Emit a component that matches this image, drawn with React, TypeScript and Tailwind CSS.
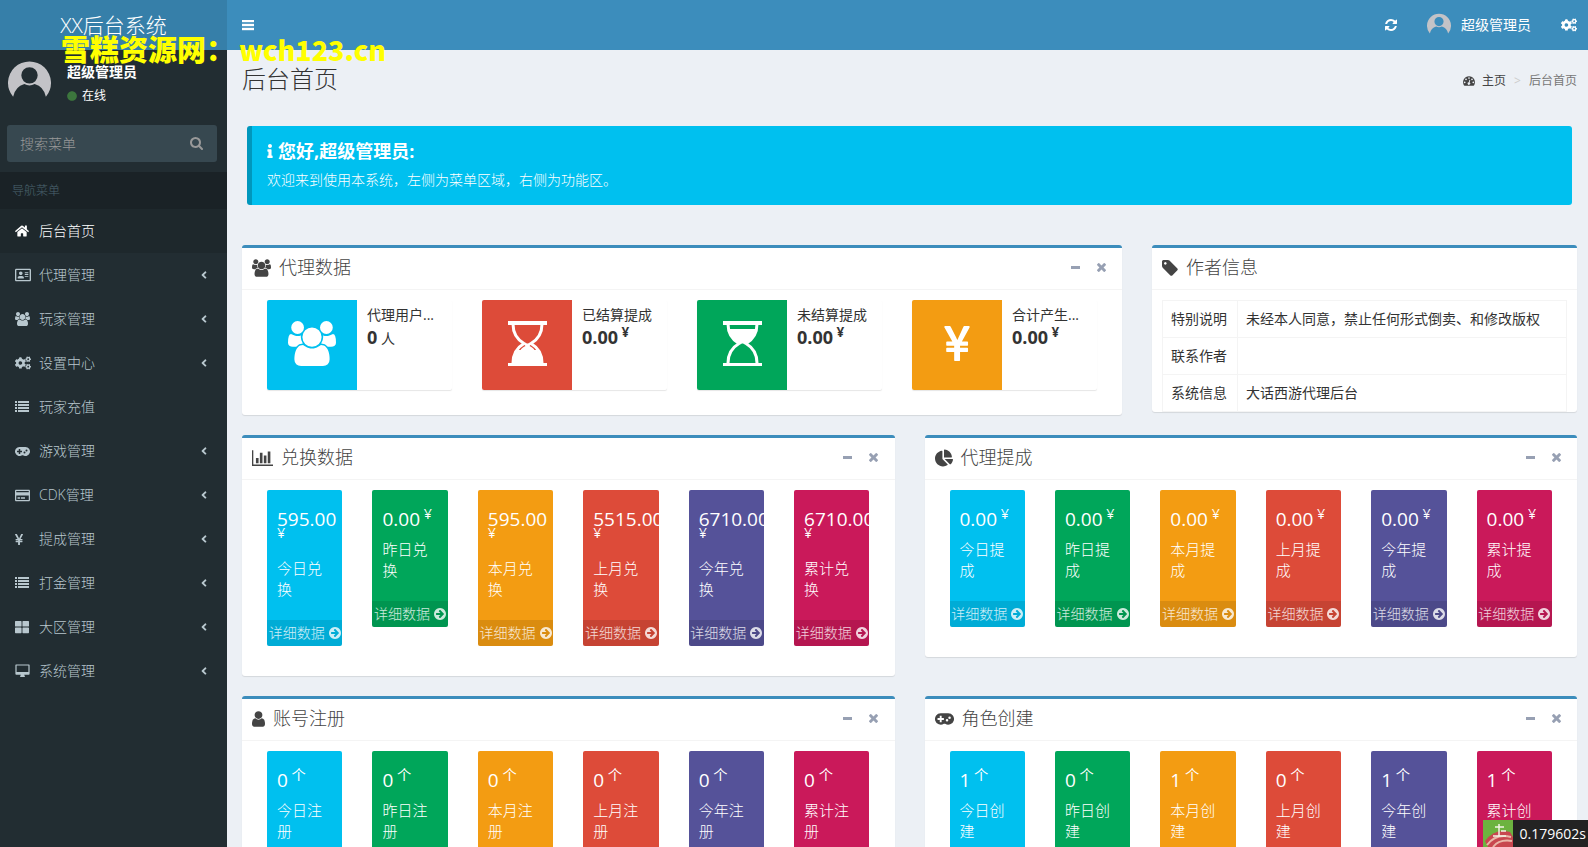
import type { ReactNode } from 'react'
import {
  FaAngleLeft,
  FaChartPie,
  FaCircle,
  FaCogs,
  FaHome,
  FaInfo,
  FaRegAddressCard,
  FaRegCreditCard,
  FaThLarge,
} from 'react-icons/fa'

interface IconProps {
  className?: string
}

function GroupIcon({ className }: IconProps) {
  return (
    <svg className={className} viewBox="0 0 1920 1792" fill="currentColor" aria-hidden="true">
      <path d="M593 896q-162 5-265 128h-134q-82 0-138-40.5t-56-118.5q0-353 124-353 6 0 43.5 21t97.5 42.5 119 21.5q67 0 133-23-5 37-5 66 0 139 81 256zm1071 637q0 120-73 189.5t-194 69.5h-874q-121 0-194-69.5t-73-189.5q0-53 3.5-103.5t14-109 26.5-108.5 43-97.5 62-81 85.5-53.5 111.5-20q10 0 43 21.5t73 48 107 48 135 21.5 135-21.5 107-48 73-48 43-21.5q61 0 111.5 20t85.5 53.5 62 81 43 97.5 26.5 108.5 14 109 3.5 103.5zm-1024-1277q0 106-75 181t-181 75-181-75-75-181 75-181 181-75 181 75 75 181zm704 384q0 159-112.5 271.5t-271.5 112.5-271.5-112.5-112.5-271.5 112.5-271.5 271.5-112.5 271.5 112.5 112.5 271.5zm576 225q0 78-56 118.5t-138 40.5h-134q-103-123-265-128 81-117 81-256 0-29-5-66 66 23 133 23 59 0 119-21.5t97.5-42.5 43.5-21q124 0 124 353zm-128-609q0 106-75 181t-181 75-181-75-75-181 75-181 181-75 181 75 75 181z" />
    </svg>
  )
}

function RefreshIcon({ className }: IconProps) {
  return (
    <svg className={className} viewBox="128 128 1536 1536" fill="currentColor" aria-hidden="true">
      <path d="M1639 1056q0 5-1 7-64 268-268 434.5t-478 166.5q-146 0-282.5-55t-243.5-157l-129 129q-19 19-45 19t-45-19-19-45v-448q0-26 19-45t45-19h448q26 0 45 19t19 45-19 45l-137 137q71 66 161 102t187 36q134 0 250-65t186-179q11-17 53-117 8-23 30-23h192q13 0 22.5 9.5t9.5 22.5zm25-800v448q0 26-19 45t-45 19h-448q-26 0-45-19t-19-45 19-45l138-138q-148-137-349-137-134 0-250 65t-186 179q-11 17-53 117-8 23-30 23h-199q-13 0-22.5-9.5t-9.5-22.5v-7q65-268 270-434.5t480-166.5q146 0 284 55.5t245 156.5l130-129q19-19 45-19t45 19 19 45z" />
    </svg>
  )
}

function YenIcon({ className }: IconProps) {
  return (
    <svg className={className} viewBox="382 128 1027 1408" fill="currentColor" aria-hidden="true">
      <path d="M985.5 1536h-172q-13 0-22.5-9t-9.5-23v-330h-288q-13 0-22.5-9t-9.5-23v-103q0-13 9.5-22.5t22.5-9.5h288v-85h-288q-13 0-22.5-9t-9.5-23v-104q0-13 9.5-22.5t22.5-9.5h214l-321-578q-8-16 0-32 10-16 28-16h194q19 0 29 18l215 425q19 38 56 125 10-24 30.5-68t27.5-61l191-420q8-19 29-19h191q17 0 27 16 9 14 1 31l-313 579h215q13 0 22.5 9.5t9.5 22.5v104q0 14-9.5 23t-22.5 9h-290v85h290q13 0 22.5 9.5t9.5 22.5v103q0 14-9.5 23t-22.5 9h-290v330q0 13-9.5 22.5t-22.5 9.5z" />
    </svg>
  )
}

function BarChartIcon({ className }: IconProps) {
  return (
    <svg className={className} viewBox="0 128 2048 1536" fill="currentColor" aria-hidden="true">
      <path d="M640 896v512h-256v-512h256zm384-512v1024h-256v-1024h256zm1024 1152v128h-2048v-1536h128v1408h1920zm-640-896v768h-256v-768h256zm384-384v1152h-256v-1152h256z" />
    </svg>
  )
}

function SearchIcon({ className }: IconProps) {
  return (
    <svg className={className} viewBox="64 128 1664 1664" fill="currentColor" aria-hidden="true">
      <path d="M1216 832q0-185-131.5-316.5t-316.5-131.5-316.5 131.5-131.5 316.5 131.5 316.5 316.5 131.5 316.5-131.5 131.5-316.5zm512 832q0 52-38 90t-90 38q-54 0-90-38l-343-342q-179 124-399 124-143 0-273.5-55.5t-225-150-150-225-55.5-273.5 55.5-273.5 150-225 225-150 273.5-55.5 273.5 55.5 225 150 150 225 55.5 273.5q0 220-124 399l343 343q37 37 37 90z" />
    </svg>
  )
}

function TimesIcon({ className }: IconProps) {
  return (
    <svg className={className} viewBox="302 366 1188 1188" fill="currentColor" aria-hidden="true">
      <path d="M1490 1322q0 40-28 68l-136 136q-28 28-68 28t-68-28l-294-294-294 294q-28 28-68 28t-68-28l-136-136q-28-28-28-68t28-68l294-294-294-294q-28-28-28-68t28-68l136-136q28-28 68-28t68 28l294 294 294-294q28-28 68-28t68 28l136 136q28 28 28 68t-28 68l-294 294 294 294q28 28 28 68z" />
    </svg>
  )
}

function UserIcon({ className }: IconProps) {
  return (
    <svg className={className} viewBox="256 128 1280 1536" fill="currentColor" aria-hidden="true">
      <path d="M1536 1399q0 109-62.5 187t-150.500 78h-854q-88 0-150.500-78t-62.500-187q0-85 8.500-160.500t31.500-152 58.500-131 94-89 134.500-34.500q131 128 313 128t313-128q76 0 134.500 34.500t94 89 58.500 131 31.500 152 8.500 160.500zm-256-887q0 159-112.500 271.500t-271.500 112.500-271.500-112.500-112.500-271.500 112.500-271.500 271.500-112.500 271.500 112.500 112.500 271.500z" />
    </svg>
  )
}

function TagIcon({ className }: IconProps) {
  return (
    <svg className={className} viewBox="128 128 1536 1536" fill="currentColor" aria-hidden="true">
      <path d="M576 448q0-53-37.5-90.5t-90.5-37.5-90.5 37.5-37.5 90.5 37.5 90.5 90.5 37.5 90.5-37.5 37.5-90.5zm1067 576q0 53-37 90l-491 492q-39 37-91 37-53 0-90-37l-715-716q-38-37-64.5-101t-26.5-117v-416q0-52 38-90t90-38h416q53 0 117 26.5t102 64.5l715 714q37 39 37 91z" />
    </svg>
  )
}

function ArrowCircleIcon({ className }: IconProps) {
  return (
    <svg className={className} viewBox="128 128 1536 1536" fill="currentColor" aria-hidden="true">
      <path d="M1413 896q0-27-18-45l-91-91-362-362q-18-18-45-18t-45 18l-91 91q-18 18-18 45t18 45l189 189h-502q-26 0-45 19t-19 45v128q0 26 19 45t45 19h502l-189 189q-19 19-19 45t19 45l91 91q18 18 45 18t45-18l362-362 91-91q18-18 18-45zm251 0q0 209-103 385.5t-279.5 279.5-385.5 103-385.5-103-279.5-279.5-103-385.5 103-385.5 279.5-279.5 385.5-103 385.5 103 279.5 279.5 103 385.5z" />
    </svg>
  )
}

function BarsIcon() {
  return (
    <svg className="h-[11px] w-3" viewBox="0 0 12 11" fill="currentColor" aria-hidden="true">
      <path d="M0 0h12v2H0zM0 4h12v2H0zM0 8h12v2H0z" stroke="currentColor" strokeWidth=".4" />
    </svg>
  )
}

function ListIcon() {
  return (
    <svg className="h-3 w-[14px]" viewBox="0 0 14 12" fill="currentColor" aria-hidden="true">
      <path d="M0 0h2v2H0zM3 0h11v2H3zM0 3h2v2H0zM3 3h11v2H3zM0 6h2v2H0zM3 6h11v2H3zM0 9h2v2H0zM3 9h11v2H3z" />
    </svg>
  )
}

function GamepadIcon({ className }: IconProps) {
  return (
    <svg className={className} viewBox="0 0 30 18" fill="currentColor" fillRule="evenodd" aria-hidden="true">
      <path d="M9 0h12a9 9 0 1 1-5 16.500h-2A9 9 0 1 1 9 0zM7.500 4v3.500H4v3h3.500V14h3v-3.500H14v-3h-3.500V4zM19 9a2 2 0 1 0 0 4 2 2 0 0 0 0-4zM23 5a2 2 0 1 0 0 4 2 2 0 0 0 0-4z" />
    </svg>
  )
}

function DesktopIcon() {
  return (
    <svg className="h-[14px] w-[15px]" viewBox="0 0 15 14" aria-hidden="true">
      <path d="M1 1h13v9H1z" fill="none" stroke="currentColor" strokeWidth="1.200" strokeLinejoin="round" />
      <path d="M1 8h13v2.500H1zM6 10h3l1 3H5z" fill="currentColor" />
    </svg>
  )
}

function DashboardIcon({ className }: IconProps) {
  return (
    <svg className={className} viewBox="0 0 28 22" fill="currentColor" fillRule="evenodd" aria-hidden="true">
      <path d="M14 0a14 14 0 0 1 12 21q-.5 1-1.500 1h-21q-1 0-1.500-1A14 14 0 0 1 14 0zM4 12a2 2 0 1 0 0 4 2 2 0 0 0 0-4zM7 5a2 2 0 1 0 0 4 2 2 0 0 0 0-4zM14 2a2 2 0 1 0 0 4 2 2 0 0 0 0-4zM21 5a2 2 0 1 0 0 4 2 2 0 0 0 0-4zM24 12a2 2 0 1 0 0 4 2 2 0 0 0 0-4zM15 8l-1.500 6a3 3 0 1 0 2 .5L17 8.500z" />
    </svg>
  )
}

// sand at the bottom when `done`, otherwise still at the top
function Hourglass({ done }: { done?: boolean }) {
  return (
    <svg className="h-[45px] w-[39px]" viewBox="0 0 39 45" fill="none" aria-hidden="true">
      <path d="M0 0h39v4H0zM0 42h39v3H0z" fill="currentColor" />
      <path d="M5 3c0 10 5 16 11 19.500C10 26 5 32 5 42M34 3c0 10-5 16-11 19.500C29 26 34 32 34 42" stroke="currentColor" strokeWidth="3" />
      {done ? (
        <path d="M15 22.500h9L21.500 25c2 1 4 2 5 4h-14c1-2 3-3 5-4zM10 29h19c3 4 5 8 5 13H5c0-5 2-9 5-13z" fill="currentColor" />
      ) : (
        <path d="M6 8h27c-1 7-5 12-10 14.500h-7C11 20 7 15 6 8z" fill="currentColor" />
      )}
    </svg>
  )
}

function Avatar({ className }: IconProps) {
  return (
    <svg className={className} viewBox="0 4 42 42" aria-hidden="true">
      <path fill="#c3c3c7" fillRule="evenodd" d="M5 40A21 21 0 1 1 37 40Q35 30 26 27.500A10 10 0 0 1 16 27.500Q7 30 5 40zM21 11a8 8 0 1 1 0 16 8 8 0 0 1 0-16z" />
    </svg>
  )
}

interface MenuItem {
  label: string
  icon: ReactNode
  children?: boolean
}

const menuItems: MenuItem[] = [
  { label: '代理管理', icon: <FaRegAddressCard className="size-4" />, children: true },
  { label: '玩家管理', icon: <GroupIcon className="h-[14px] w-[15px]" />, children: true },
  { label: '设置中心', icon: <FaCogs className="size-4" />, children: true },
  { label: '玩家充值', icon: <ListIcon /> },
  { label: '游戏管理', icon: <GamepadIcon className="h-[9px] w-[15px]" />, children: true },
  { label: 'CDK管理', icon: <FaRegCreditCard className="size-[15px]" />, children: true },
  { label: '提成管理', icon: <YenIcon className="h-[11px] w-2" />, children: true },
  { label: '打金管理', icon: <ListIcon />, children: true },
  { label: '大区管理', icon: <FaThLarge className="size-[14px]" />, children: true },
  { label: '系统管理', icon: <DesktopIcon />, children: true },
]

const infoItems = [
  { label: '代理用户...', value: '0', unit: '人', color: 'bg-[#00c0ef]', icon: <GroupIcon className="h-[45px] w-12" /> },
  { label: '已结算提成', value: '0.00', color: 'bg-[#dd4b39]', icon: <Hourglass done /> },
  { label: '未结算提成', value: '0.00', color: 'bg-[#00a65a]', icon: <Hourglass /> },
  { label: '合计产生...', value: '0.00', color: 'bg-[#f39c12]', icon: <YenIcon className="h-[35px] w-[26px]" /> },
]

const periods = ['今日', '昨日', '本月', '上月', '今年', '累计']
const colors = ['bg-[#00c0ef]', 'bg-[#00a65a]', 'bg-[#f39c12]', 'bg-[#dd4b39]', 'bg-[#555299]', 'bg-[#ca195a]']

const authorRows = [
  ['特别说明', '未经本人同意，禁止任何形式倒卖、和修改版权'],
  ['联系作者', ''],
  ['系统信息', '大话西游代理后台'],
]

interface BoxProps {
  title: string
  icon: ReactNode
  tools?: boolean
  children: ReactNode
}

function Box({ title, icon, tools = true, children }: BoxProps) {
  return (
    <section className="mb-5 rounded-[3px] border-t-[3px] border-[#3c8dbc] bg-white shadow-[0_1px_1px_rgba(0,0,0,0.1)]">
      <header className="flex items-center justify-between border-b border-[#f4f4f4] px-[10px] pt-[9px] pb-[11px] text-[#444]">
        <h3 className="flex items-center gap-2 text-[18px] leading-[21px] font-light">
          {icon}
          {title}
        </h3>
        {tools && (
          <div className="flex gap-1 text-[#97a0b3]">
            <button className="flex h-5 w-[22px] items-center justify-center" aria-label="收起">
              <span className="h-[3px] w-[9px] bg-current" />
            </button>
            <button className="flex h-5 w-[22px] items-center justify-center" aria-label="关闭">
              <TimesIcon className="size-[9px]" />
            </button>
          </div>
        )}
      </header>
      {children}
    </section>
  )
}

interface StatBoxProps {
  title: string
  icon: ReactNode
  suffix: string
  unit: string
  values: string[]
}

function StatBox({ title, icon, suffix, unit, values }: StatBoxProps) {
  return (
    <div className="w-1/2 px-[15px]">
      <Box title={title} icon={icon}>
        <div className="grid grid-cols-6 items-start p-[10px]">
          {periods.map((period, i) => (
            <div key={period} className="min-w-0 px-[15px] pb-5">
              <div className={`overflow-hidden rounded-[2px] text-white ${colors[i]}`}>
                <div className="p-[10px]">
                  <h4 className="mb-[10px] pt-[10px] text-[19px] leading-[19px]">
                    {values[i]}
                    <sup> {unit}</sup>
                  </h4>
                  <p className="mb-[10px] text-[15px] leading-[21px] font-light">{period + suffix}</p>
                </div>
                <a href="#" className="flex items-center justify-center gap-1 bg-black/10 py-[3px] text-sm leading-5 font-light whitespace-nowrap text-white/80">
                  详细数据
                  <ArrowCircleIcon className="size-3 shrink-0" />
                </a>
              </div>
            </div>
          ))}
        </div>
      </Box>
    </div>
  )
}

function Header() {
  return (
    <header className="flex h-[50px] shrink-0 bg-[#3c8dbc] text-white">
      <a href="#" className="flex w-[227px] shrink-0 items-center justify-center bg-[#367fa9] text-[21px] font-light">
        XX后台系统
      </a>
      <nav className="flex flex-1 items-center justify-between pr-[11px] pl-[15px]">
        <button aria-label="切换菜单">
          <BarsIcon />
        </button>
        <div className="flex items-center gap-[30px] text-sm">
          <a href="#" aria-label="刷新">
            <RefreshIcon className="size-3" />
          </a>
          <a href="#" className="flex items-center gap-[10px]">
            <Avatar className="size-6" />
            超级管理员
          </a>
          <a href="#" aria-label="设置">
            <FaCogs className="size-4" />
          </a>
        </div>
      </nav>
    </header>
  )
}

function Sidebar() {
  return (
    <aside className="w-[227px] shrink-0 bg-[#222d32] text-sm text-[#b8c7ce]">
      <div className="flex gap-4 px-2 py-[10px] text-white">
        <Avatar className="size-[43px]" />
        <div className="h-[55px]">
          <p className="mt-[2px] mb-[6px] leading-5 font-bold">超级管理员</p>
          <a href="#" className="flex items-center gap-[5px] text-xs">
            <FaCircle className="size-[10px] text-[#3c763d]" />
            在线
          </a>
        </div>
      </div>
      <form className="mr-[10px] mb-[10px] ml-[7px] flex h-[37px] rounded-[3px] bg-[#374850]">
        <input type="text" placeholder="搜索菜单" aria-label="搜索菜单" className="min-w-0 flex-1 px-[13px] font-light outline-none placeholder:text-[#999]" />
        <button className="px-[14px] text-[#999]" aria-label="搜索">
          <SearchIcon className="size-[13px]" />
        </button>
      </form>
      <ul className="font-light">
        <li className="bg-[#1a2226] px-3 py-[10px] text-xs leading-[17px] text-[#4b646f]">导航菜单</li>
        <li>
          <a href="#" className="flex items-center bg-[#1e282c] py-3 pl-[15px] leading-5 text-white">
            <span className="w-6">
              <FaHome className="size-[14px]" />
            </span>
            后台首页
          </a>
        </li>
        {menuItems.map((item) => (
          <li key={item.label}>
            <a href="#" className="flex items-center py-3 pr-[17px] pl-[15px] leading-5">
              <span className="w-6">{item.icon}</span>
              <span className="flex-1">{item.label}</span>
              {item.children && <FaAngleLeft className="size-3" />}
            </a>
          </li>
        ))}
      </ul>
    </aside>
  )
}

export default function App() {
  return (
    <div className="relative flex h-screen flex-col overflow-hidden bg-[#ecf0f5] font-['Open_Sans','Noto_Sans_CJK_SC',sans-serif] text-sm text-[#333]">
      <Header />
      <div className="flex min-h-0 flex-1">
        <Sidebar />
        <main className="min-w-0 flex-1 overflow-y-auto pr-[11px] pl-[15px] [scrollbar-width:none]">
          <div className="flex items-end justify-between pt-[15px]">
            <h1 className="text-2xl leading-[28px] font-light">后台首页</h1>
            <nav className="flex items-center pb-1 text-xs text-[#444]">
              <DashboardIcon className="mr-[7px] h-[10px] w-3" />
              <a href="#">主页</a>
              <span className="mx-2 text-[#ccc]">&gt;</span>
              <span className="text-[#777]">后台首页</span>
            </nav>
          </div>

          <div className="mx-[5px] mt-[33px] mb-10 rounded-[3px] border-l-[5px] border-[#0097bc] bg-[#00c0ef] py-[15px] pr-[30px] pl-[15px] text-white">
            <h4 className="mb-2 flex items-center gap-[5px] text-[18px] leading-5 font-bold">
              <FaInfo className="h-[14px] w-[6px]" />
              您好,超级管理员:
            </h4>
            <p className="leading-[21px] font-light">欢迎来到使用本系统，左侧为菜单区域，右侧为功能区。</p>
          </div>

          <div className="-mx-[15px] flex items-start">
            <div className="w-2/3 px-[15px]">
              <Box title="代理数据" icon={<GroupIcon className="h-[18px] w-[19px]" />}>
                <div className="grid grid-cols-4 p-[10px]">
                  {infoItems.map((item) => (
                    <div key={item.label} className="px-[15px] pb-[15px]">
                      <div className="flex rounded-[2px] shadow-[0_1px_1px_rgba(0,0,0,0.1)]">
                        <span className={`flex size-[90px] shrink-0 items-center justify-center rounded-l-[2px] pb-1 text-white ${item.color}`}>
                          {item.icon}
                        </span>
                        <div className="min-w-0 px-[10px] py-[5px] whitespace-nowrap">
                          <span className="block leading-5">{item.label}</span>
                          <span className="block text-[18px] leading-6 font-bold">
                            {item.value}
                            {item.unit ? <small className="text-sm font-normal"> {item.unit}</small> : <sup> ¥</sup>}
                          </span>
                        </div>
                      </div>
                    </div>
                  ))}
                </div>
              </Box>
            </div>
            <div className="w-1/3 px-[15px]">
              <Box title="作者信息" icon={<TagIcon className="size-4" />} tools={false}>
                <div className="px-[10px] pt-[10px]">
                  <table className="w-full border-collapse border border-[#f4f4f4]">
                    <tbody>
                      {authorRows.map(([name, value]) => (
                        <tr key={name}>
                          <th scope="row" className="w-[75px] border border-[#f4f4f4] p-2 text-left leading-5 font-normal whitespace-nowrap">
                            {name}
                          </th>
                          <td className="border border-[#f4f4f4] p-2 leading-5">{value}</td>
                        </tr>
                      ))}
                    </tbody>
                  </table>
                </div>
              </Box>
            </div>
          </div>

          <div className="-mx-[15px] flex items-start">
            <StatBox
              title="兑换数据"
              icon={<BarChartIcon className="h-4 w-[21px]" />}
              suffix="兑换"
              unit="¥"
              values={['595.00', '0.00', '595.00', '5515.00', '6710.00', '6710.00']}
            />
            <StatBox
              title="代理提成"
              icon={<FaChartPie className="size-[18px]" />}
              suffix="提成"
              unit="¥"
              values={['0.00', '0.00', '0.00', '0.00', '0.00', '0.00']}
            />
          </div>

          <div className="-mx-[15px] flex items-start">
            <StatBox title="账号注册" icon={<UserIcon className="h-4 w-[13px]" />} suffix="注册" unit="个" values={['0', '0', '0', '0', '0', '0']} />
            <StatBox title="角色创建" icon={<GamepadIcon className="h-3 w-[19px]" />} suffix="创建" unit="个" values={['1', '0', '1', '0', '1', '1']} />
          </div>
        </main>
      </div>

      {/* watermark */}
      <p className="pointer-events-none absolute top-7 left-[61px] font-['Noto_Sans_CJK_SC',sans-serif] text-[29px] leading-10 font-black text-[#ff0]">
        雪糕资源网：<span className="ml-1 text-[27px]">wch123.cn</span>
      </p>

      {/* page trace badge */}
      <div className="absolute right-0 bottom-0 flex h-[27px] items-center bg-[#232323] pr-[2px] text-white">
        <svg className="mr-[7px] h-[27px] w-[30px]" viewBox="0 0 30 27" aria-hidden="true">
          <path d="M0 0h30v27H0z" fill="#6cb33f" />
          <path d="M2 21Q12 8 27 12l3 5v10H5z" fill="#c8474f" />
          <path d="M4 25Q13 13 28 17M10 27q6-8 19-6" fill="none" stroke="#e9b7a8" strokeWidth="2" />
          <path d="M12 7h9M16 4v12M10 16h13M18 11h5" stroke="#f4f4e6" strokeWidth="1.500" />
        </svg>
        0.179602s
      </div>
    </div>
  )
}
